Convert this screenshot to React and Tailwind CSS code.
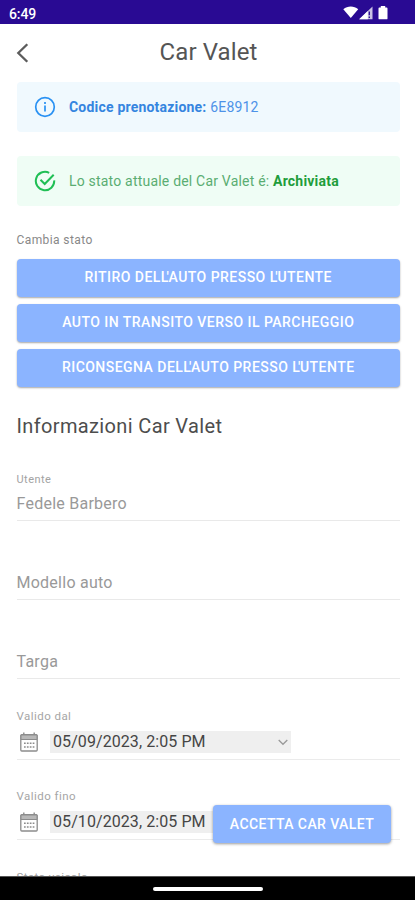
import { Fragment, useState } from 'react';

const actions = [
  "RITIRO DELL'AUTO PRESSO L'UTENTE",
  'AUTO IN TRANSITO VERSO IL PARCHEGGIO',
  "RICONSEGNA DELL'AUTO PRESSO L'UTENTE",
];

// Pulls the apostrophe in towards the L before it
function KernedLabel({ text }) {
  return (
    <span>
      {text.split("L'").map((part, i) => (
        <Fragment key={i}>
          {i > 0 && (
            <>
              <span className="tracking-[-1.9px]">L</span>
              <span className="tracking-[-0.3px]">'</span>
            </>
          )}
          {part}
        </Fragment>
      ))}
    </span>
  );
}

function StatusBar() {
  return (
    <div className="h-6 shrink-0 bg-[#290a93] flex items-center justify-between pl-[9px] pr-[27px] text-white">
      <span className="text-sm font-medium leading-none pt-[3px] tracking-[-0.1px]">6:49</span>
      <svg width="45" height="14" viewBox="0 0 45 14" className="mt-px" fill="currentColor">
        <path d="M0.3 3.2C4.5-.4 11-.4 15.2 3.2L7.8 12z" />
        <path d="M29.5.5v12.8H16.2z" opacity="0.75" />
        <path d="M24.8 5v8.3h-8.6z" />
        <path d="M26.3 5.5v3.8M26.3 10.6v1.4" stroke="#290a93" strokeWidth="1.3" />
        <path d="M37.8 0h4.4v1.5h1.4q.9 0 .9.9v10q0 .9-.9.9h-7.2q-.9 0-.9-.9v-10q0-.9.9-.9h1.4z" />
      </svg>
    </div>
  );
}

function Header() {
  return (
    <header className="h-[58px] shrink-0 flex items-center pl-4 pr-3.5">
      <button aria-label="Indietro" className="w-8">
        <svg width="13" height="20" viewBox="0 0 13 20" fill="none" stroke="#5c5c5c" strokeWidth="2.3">
          <path d="M11.3 1.2 2.3 10l9 8.8" />
        </svg>
      </button>
      <h1 className="flex-1 text-center text-2xl leading-7 text-[#555] pb-[3px] tracking-[0.1px]">Car Valet</h1>
      <span className="w-8" />
    </header>
  );
}

function CalendarIcon() {
  return (
    <svg width="18" height="20" viewBox="0 0 18 20" className="ml-[3.5px] mr-3 shrink-0" fill="none" stroke="#8c8c8c">
      <rect x="0.8" y="2.6" width="16.4" height="16.4" rx="1" strokeWidth="1.3" />
      <path d="M1 3h16v4.5H1z" fill="#b8b8b8" strokeWidth="1" />
      <path d="M3.8 0.5v2.5M14.2 0.5v2.5" strokeWidth="1.4" />
      <path d="M4 11.2h11M4 15h11" strokeWidth="1.6" strokeDasharray="1.7 1.2" />
    </svg>
  );
}

// Read-only line with an optional small label on top
function Field({ label, value }) {
  return (
    <div className="h-[79px] shrink-0 flex flex-col justify-end border-b-[1.5px] border-[#e9e9e9] pb-[6px]">
      {label && <span className="text-[11px] leading-4 tracking-[0.45px] text-[#a3a3a3]">{label}</span>}
      <span className="mt-1.5 text-base leading-5 tracking-[0.25px] text-[#999]">{value}</span>
    </div>
  );
}

function DateField({ label, value }) {
  return (
    <div className="h-[80px] shrink-0 flex flex-col justify-end border-b-[1.5px] border-[#ebebeb] pb-1.5">
      <span className="text-[11.5px] leading-4 tracking-[0.45px] text-[#a6a6a6]">{label}</span>
      <div className="mt-[7px] flex items-center">
        <CalendarIcon />
        <button className="w-[241px] h-[22px] bg-[#efefef] px-[3px] flex items-center justify-between">
          <span className="text-base leading-5 tracking-[0.08px] text-[#454545]">{value}</span>
          <svg width="10" height="7" viewBox="0 0 10 7" fill="none" stroke="#999" strokeWidth="1.3">
            <path d="m.7 1 4.3 4.3L9.3 1" />
          </svg>
        </button>
      </div>
    </div>
  );
}

export default function App() {
  const [accepted, setAccepted] = useState(false);

  return (
    <div className="relative w-[415px] h-[900px] overflow-hidden bg-white flex flex-col font-['Roboto',sans-serif]">
      <StatusBar />
      <Header />

      <main className="flex-1 min-h-0 overflow-hidden pl-[16.5px] pr-[15px] flex flex-col">
        {/* booking code */}
        <div className="h-[50px] shrink-0 bg-[#f0f9fe] rounded-sm flex items-center pl-[17.5px] text-sm text-[#4d92e8]">
          <svg width="22" height="22" viewBox="0 0 22 22" className="mr-[13px]" fill="none" stroke="#2991f3" strokeWidth="1.7">
            <circle cx="11" cy="11" r="9.3" />
            <path d="M11 9.6v6M11 6v2" />
          </svg>
          <span className="tracking-[0.2px] pb-px">
            <b className="font-bold text-[#3585e0]">Codice prenotazione:</b> 6E8912
          </span>
        </div>

        {/* current status */}
        <div className="mt-6 h-[50px] shrink-0 bg-[#effdf5] rounded-sm flex items-center pl-[17.5px] text-sm text-[#5aad72]">
          <svg width="22" height="22" viewBox="0 0 22 22" className="mr-[13px]" fill="none" stroke="#20bf55" strokeWidth="2">
            <path d="M15.2 2.8A9.2 9.2 0 1 0 20.2 10.4" />
            <path d="m6.5 9.8 4.2 4.2 9-9.3" />
          </svg>
          <span className="tracking-[0.2px]">
            Lo stato attuale del Car Valet é: <b className="font-bold text-[#1f9d3c]">Archiviata</b>
          </span>
        </div>

        <p className="mt-[26px] h-4 shrink-0 text-xs leading-4 tracking-[0.4px] text-[#888]">Cambia stato</p>
        <div className="mt-[11px] shrink-0 flex flex-col gap-[7px]">
          {actions.map((label) => (
            <button
              key={label}
              className="h-[38px] rounded bg-[#8bb4ff] shadow-[0_1px_2px_rgba(0,0,0,0.35)] text-white text-sm font-medium tracking-[0.47px] pb-[2px]"
            >
              <KernedLabel text={label} />
            </button>
          ))}
        </div>

        <h2 className="mt-[25px] h-[30px] shrink-0 text-xl leading-7 tracking-[0.36px] text-[#4d4d4d]">Informazioni Car Valet</h2>

        <Field label="Utente" value="Fedele Barbero" />
        <Field value="Modello auto" />
        <Field value="Targa" />
        <div className="h-px shrink-0" />
        <DateField label="Valido dal" value="05/09/2023, 2:05 PM" />
        <DateField label="Valido fino" value="05/10/2023, 2:05 PM" />
        <p className="mt-[29px] shrink-0 text-[11.5px] leading-4 tracking-[0.4px] text-[#a0a0a0]">Stato veicolo</p>
      </main>

      {/* floating action over the form */}
      <button
        onClick={() => setAccepted(!accepted)}
        aria-pressed={accepted}
        className="absolute left-[213px] top-[804.5px] w-[178px] h-[38px] rounded bg-[#8bb4ff] shadow-[0_1px_3px_rgba(0,0,0,0.4)] text-white text-sm font-medium tracking-[0.4px]"
      >
        ACCETTA CAR VALET
      </button>

      {/* system navigation */}
      <div className="h-6 shrink-0 bg-black border-t border-[#555] flex justify-center pt-[10px]">
        <div className="w-[110px] h-1 bg-white rounded-xs" />
      </div>
    </div>
  );
}
